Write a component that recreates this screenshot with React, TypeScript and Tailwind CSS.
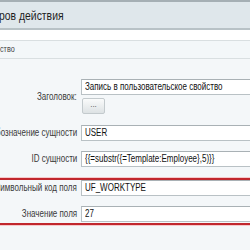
const font = { fontFamily: '"Liberation Sans", Arial, sans-serif' };

const Label = ({ text }: { text: string }) => (
  <div className="w-[81px] shrink-0 pr-[4px] text-[10px] leading-none text-[#3a3a3a] whitespace-nowrap flex justify-end">
    <span className="inline-block scale-x-[0.8] origin-right">{text}</span>
  </div>
);

const Field = ({ value }: { value: string }) => (
  <div className="h-[16px] w-[200px] shrink-0 bg-white border border-[#b9c1c5] border-t-[#a9b1b5] flex items-center pl-[3px] text-[10px] leading-none text-[#111] whitespace-nowrap overflow-hidden">
    <span className="inline-block scale-x-[0.8] origin-left">{value}</span>
  </div>
);

const Row = ({ label, value, className = "" }: { label: string; value: string; className?: string }) => (
  <div className={`flex items-center ${className}`}>
    <Label text={label} />
    <Field value={value} />
  </div>
);

export default function App() {
  return (
    <div className="w-[250px] h-[250px] overflow-hidden bg-[#f4f7f9] flex flex-col" style={font}>
      {/* dialog header */}
      <div className="h-[30px] shrink-0 bg-[#dfe7eb] border-t-2 border-[#a5afb4] border-b-2 border-b-[#b8c2c6] flex items-center">
        <span className="ml-[-1px] inline-block scale-x-[0.8] origin-left text-[13px] leading-none text-[#1e1e1e] whitespace-nowrap">ров действия</span>
      </div>
      <div className="h-[10px] shrink-0 bg-white" />
      <div className="h-[19px] shrink-0 bg-[#f3f7f9] border-t border-b border-[#d9dfe1] flex items-center">
        <span className="inline-block scale-x-[0.8] origin-left text-[9px] leading-none text-[#444]">ство</span>
      </div>

      <div className="flex flex-col pt-[20px]">
        <div className="flex items-center">
          <Label text="Заголовок:" />
          <div className="flex flex-col">
            <Field value="Запись в пользовательское свойство" />
            <button className="mt-[3px] ml-[1px] h-[16px] w-[23px] rounded-[2px] border border-[#c3cacd] bg-gradient-to-b from-[#fafbfb] to-[#dde2e4] text-[8px] leading-none text-[#444] flex items-center justify-center pb-[2px]">
              ...
            </button>
          </div>
        </div>
        <Row label="Обозначение сущности" value="USER" className="mt-[11px]" />
        <Row label="ID сущности" value="{{=substr({=Template:Employee},5)}}" className="mt-[10px]" />

        <div className="mt-[11px] border-t-2 border-b-2 border-[#c1272d] shadow-[0_1px_0_#f6c9cb,0_-1px_0_#f6c9cb] pb-[1px]">
          <Row label="Символьный код поля" value="UF_WORKTYPE" />
          <Row label="Значение поля" value="27" className="mt-[10px]" />
        </div>

        <div className="mt-[25px] h-[2px] bg-[#c4cbce]" />
      </div>
    </div>
  );
}
